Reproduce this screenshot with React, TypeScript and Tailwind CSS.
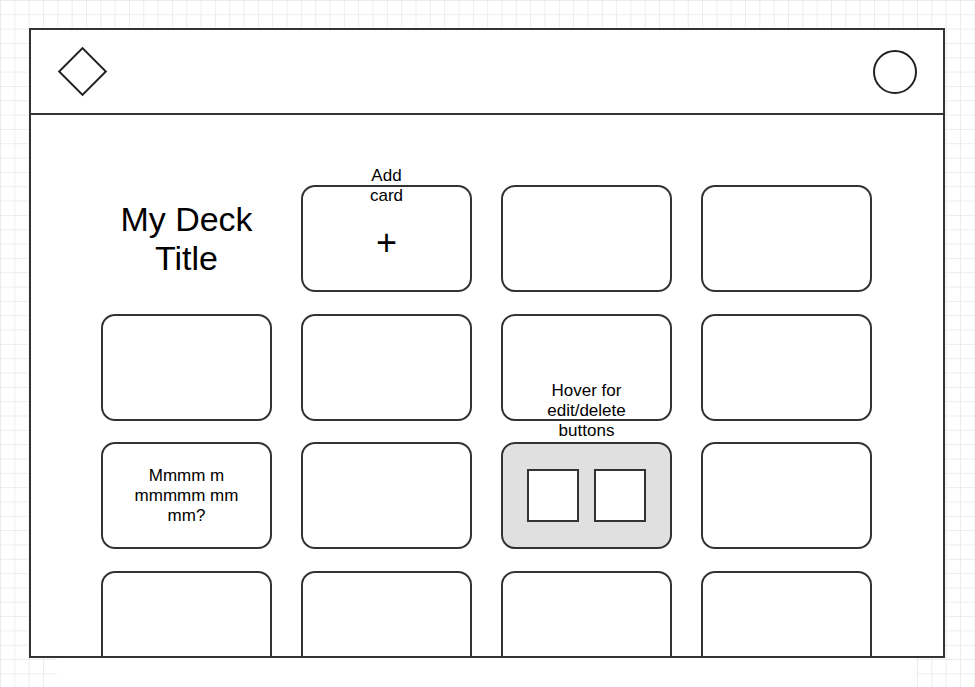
const card = "relative h-[107px] rounded-[14px] border-2 border-[#333] bg-white";

function Card({ children, className = "" }: { children?: React.ReactNode; className?: string }) {
  return <div className={`${card} ${className}`}>{children}</div>;
}

export default function App() {
  return (
    <div className="w-[975px] h-[687px] overflow-hidden flex flex-col pt-[28px] bg-white bg-[linear-gradient(to_right,#ececec_1px,transparent_1px),linear-gradient(to_bottom,#ececec_1px,transparent_1px)] [background-size:14.33px_14.33px] font-['Liberation_Sans',Arial,sans-serif] text-black">
      <div className="ml-[29px] w-[916px] h-[630px] shrink-0 flex flex-col overflow-hidden border-2 border-[#333] bg-white">
        <header className="h-[85px] shrink-0 flex items-center justify-between border-b-2 border-[#333] pl-[34px] pr-[26px]">
          <div className="w-[35px] h-[35px] rotate-45 border-2 border-[#222]" />
          <div className="w-[44px] h-[44px] rounded-full border-2 border-[#222]" />
        </header>

        <main className="grid grid-cols-[repeat(4,171px)] auto-rows-[107px] gap-x-[29px] gap-y-[21.67px] pl-[70px] pt-[70px]">
          <div className="flex items-center justify-center text-center text-[34px] leading-[39px]">
            My Deck
            <br />
            Title
          </div>
          <Card className="flex items-center justify-center">
            <div className="absolute -top-[21px] left-1/2 -translate-x-1/2 text-center text-[17px] leading-[20px]">
              Add
              <br />
              card
            </div>
            <span className="mt-[9px] text-[36px] leading-none">+</span>
          </Card>
          <Card />
          <Card />

          <Card />
          <Card />
          <Card />
          <Card />

          <Card className="flex items-center justify-center text-center text-[17px] leading-[20px]">
            <p>
              Mmmm m
              <br />
              mmmmm mm
              <br />
              mm?
            </p>
          </Card>
          <Card />
          <Card className="flex items-center justify-center gap-[15px] !bg-[#e0e0e0]">
            <div className="absolute bottom-[calc(100%+3px)] left-1/2 -translate-x-1/2 whitespace-nowrap text-center text-[17px] leading-[20px]">
              Hover for
              <br />
              edit/delete
              <br />
              buttons
            </div>
            <div className="w-[52px] h-[53px] border-2 border-[#333] bg-white" />
            <div className="w-[52px] h-[53px] border-2 border-[#333] bg-white" />
          </Card>
          <Card />

          <Card />
          <Card />
          <Card />
          <Card />
        </main>
      </div>
      <div className="ml-[57px] w-[859px] grow bg-white" />
    </div>
  );
}
